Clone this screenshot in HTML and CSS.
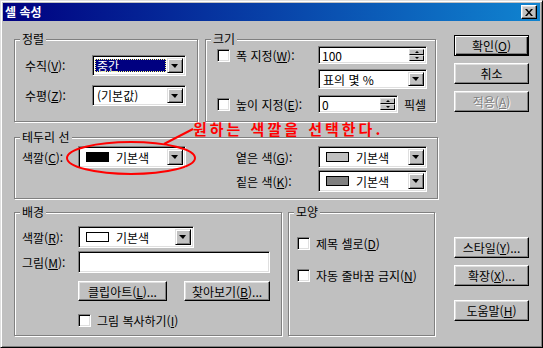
FILE: index.html
```html
<!DOCTYPE html>
<html lang="ko">

<head>
    <meta charset="UTF-8">
    <meta name="viewport" content="width=device-width, initial-scale=1.0">
    <title>셀 속성</title>
    <link rel="stylesheet" href="styles.css">
</head>

<body>
    <div class="window">
        <div class="titlebar">
            <span class="title">셀 속성</span>
            <button class="close" type="button">
                <svg width="8" height="7" viewBox="0 0 8 7"><path d="M0 0h2l2 2.5L6 0h2L5 3.5 8 7H6L4 4.5 2 7H0l3-3.5z" fill="#000"/></svg>
            </button>
        </div>

        <div class="dialog-body">
            <div class="main">
                <div class="row">
                    <div class="group g-align">
                        <span class="group-title">정렬</span>
                        <div class="form-row">
                            <span class="lbl lbl-align">수직(<u>V</u>):</span>
                            <div class="field combo w-align">
                                <span class="combo-text selected">중간</span>
                                <span class="drop"></span>
                            </div>
                        </div>
                        <div class="form-row gap-9">
                            <span class="lbl lbl-align">수평(<u>Z</u>):</span>
                            <div class="field combo w-align">
                                <span class="combo-text">(기본값)</span>
                                <span class="drop"></span>
                            </div>
                        </div>
                    </div>

                    <div class="group g-size">
                        <span class="group-title">크기</span>
                        <div class="form-row">
                            <span class="check-lbl"><span class="field check"></span><span>폭 지정(<u>W</u>):</span></span>
                            <div class="field spin w-width">
                                <span class="spin-text">100</span>
                                <span class="spin-btns"><span class="spin-up"></span><span class="spin-down"></span></span>
                            </div>
                        </div>
                        <div class="form-row gap-5 indent-size">
                            <div class="field combo combo-sm w-width">
                                <span class="combo-text">표의 몇 %</span>
                                <span class="drop"></span>
                            </div>
                        </div>
                        <div class="form-row gap-6">
                            <span class="check-lbl"><span class="field check"></span><span>높이 지정(<u>E</u>):</span></span>
                            <div class="field spin w-height">
                                <span class="spin-text">0</span>
                                <span class="spin-btns"><span class="spin-up"></span><span class="spin-down"></span></span>
                            </div>
                            <span class="unit">픽셀</span>
                        </div>
                    </div>
                </div>

                <div class="group g-border">
                    <span class="group-title">테두리 선</span>
                    <div class="border-left">
                        <div class="form-row">
                            <span class="lbl lbl-short">색깔(<u>C</u>):</span>
                            <div class="field combo combo-lg w-line">
                                <span class="combo-text"><span class="swatch sw-black"></span>기본색</span>
                                <span class="drop"></span>
                            </div>
                        </div>
                    </div>
                    <div class="border-right">
                        <div class="form-row">
                            <span class="lbl lbl-shade">옅은 색(<u>G</u>):</span>
                            <div class="field combo combo-lg w-width">
                                <span class="combo-text"><span class="swatch sw-light"></span>기본색</span>
                                <span class="drop"></span>
                            </div>
                        </div>
                        <div class="form-row gap-2">
                            <span class="lbl lbl-shade">짙은 색(<u>K</u>):</span>
                            <div class="field combo combo-lg w-width">
                                <span class="combo-text"><span class="swatch sw-dark"></span>기본색</span>
                                <span class="drop"></span>
                            </div>
                        </div>
                    </div>
                </div>

                <div class="row row-bottom">
                    <div class="group g-bg">
                        <span class="group-title">배경</span>
                        <div class="form-row">
                            <span class="lbl lbl-short">색깔(<u>R</u>):</span>
                            <div class="field combo combo-lg w-bgcolor">
                                <span class="combo-text"><span class="swatch sw-white"></span>기본색</span>
                                <span class="drop"></span>
                            </div>
                        </div>
                        <div class="form-row gap-3">
                            <span class="lbl lbl-short">그림(<u>M</u>):</span>
                            <div class="field text-input"></div>
                        </div>
                        <div class="form-row gap-8 indent-bg">
                            <button class="btn btn-clip" type="button">클립아트(<u>L</u>)...</button>
                            <button class="btn btn-browse" type="button">찾아보기(<u>B</u>)...</button>
                        </div>
                        <div class="form-row gap-11 indent-bg">
                            <span class="check-lbl"><span class="field check"></span><span>그림 복사하기(<u>I</u>)</span></span>
                        </div>
                    </div>

                    <div class="group g-shape">
                        <span class="group-title">모양</span>
                        <div class="form-row">
                            <span class="check-lbl"><span class="field check"></span><span>제목 셀로(<u>D</u>)</span></span>
                        </div>
                        <div class="form-row gap-15">
                            <span class="check-lbl"><span class="field check"></span><span>자동 줄바꿈 금지(<u>N</u>)</span></span>
                        </div>
                    </div>
                </div>
            </div>

            <div class="side">
                <button class="btn btn-side btn-default" type="button">확인(<u>O</u>)</button>
                <button class="btn btn-side" type="button">취소</button>
                <button class="btn btn-side disabled" type="button">적용(<u>A</u>)</button>
                <button class="btn btn-side btn-style" type="button">스타일(<u>Y</u>)...</button>
                <button class="btn btn-side" type="button">확장(<u>X</u>)...</button>
                <button class="btn btn-side btn-help" type="button">도움말(<u>H</u>)</button>
            </div>
        </div>
    </div>

    <!-- 빨간 설명 표시 -->
    <svg class="annot" width="543" height="348" viewBox="0 0 543 348">
        <ellipse cx="131" cy="158" rx="64" ry="16" fill="none" stroke="#ff0000" stroke-width="2"/>
        <line x1="164" y1="144" x2="193" y2="129" stroke="#ff0000" stroke-width="2"/>
    </svg>
    <div class="annot-text">원하는 색깔을 선택한다.</div>
</body>

</html>
```

FILE: styles.css
```css
* {
    box-sizing: border-box;
}

body {
    margin: 0;
    font-family: "Noto Sans CJK KR", "Liberation Sans", sans-serif;
    font-size: 12px;
    color: #000;
    background: #c0c0c0;
}

u {
    text-decoration: underline;
}

.window {
    width: 543px;
    height: 348px;
    background: #c0c0c0;
    border: 1px solid;
    border-color: #dfdfdf #000 #000 #dfdfdf;
    box-shadow: inset 1px 1px #fff, inset -1px -1px #808080;
    padding: 2px;
}

.titlebar {
    height: 18px;
    display: flex;
    align-items: center;
    justify-content: space-between;
    padding: 0 3px 0 2px;
    background: linear-gradient(to right, #000080, #1084d0);
}

.title {
    color: #fff;
    font-weight: bold;
    line-height: 18px;
}

.close {
    width: 16px;
    height: 14px;
    padding: 0;
    display: flex;
    align-items: center;
    justify-content: center;
    background: #c0c0c0;
    border: 1px solid;
    border-color: #fff #000 #000 #fff;
    box-shadow: inset -1px -1px #808080, inset 1px 1px #dfdfdf;
}

.dialog-body {
    display: flex;
    padding: 14px 0 0 11px;
}

.main {
    width: 424px;
    padding-top: 4px;
}

.row {
    display: flex;
    gap: 7px;
}

.row-bottom {
    gap: 6px;
    margin-top: 13px;
}

/* 그룹 상자 */
.group {
    position: relative;
    border: 1px solid #808080;
    box-shadow: inset 1px 1px #fff, 1px 1px #fff;
}

.group-title {
    position: absolute;
    top: -8px;
    left: 5px;
    padding: 0 2px;
    line-height: 14px;
    background: #c0c0c0;
}

.g-align {
    width: 184px;
    height: 83px;
    padding: 15px 0 0 10px;
}

.g-size {
    width: 231px;
    height: 83px;
    padding: 6px 0 0 11px;
}

.g-border {
    display: flex;
    width: 424px;
    height: 62px;
    margin-top: 15px;
    padding: 8px 0 0 7px;
}

.border-left {
    width: 214px;
}

.g-bg {
    width: 268px;
    height: 124px;
    padding: 13px 0 0 7px;
}

.g-shape {
    width: 147px;
    height: 124px;
    padding: 22px 0 0 8px;
}

/* 입력 줄 */
.form-row {
    display: flex;
    align-items: center;
}

.gap-2 { margin-top: 2px; }
.gap-3 { margin-top: 3px; }
.gap-5 { margin-top: 5px; }
.gap-6 { margin-top: 6px; }
.gap-8 { margin-top: 8px; }
.gap-9 { margin-top: 9px; }
.gap-11 { margin-top: 11px; }
.gap-15 { margin-top: 15px; }

.indent-size { margin-left: 101px; }
.indent-bg { margin-left: 56px; }

.lbl {
    flex: none;
    white-space: nowrap;
}

.lbl-align { width: 67px; }
.lbl-short { width: 56px; }
.lbl-shade { width: 82px; }

.check-lbl {
    display: flex;
    align-items: center;
    gap: 6px;
    width: 101px;
    white-space: nowrap;
}

.g-bg .check-lbl,
.g-shape .check-lbl {
    width: auto;
}

/* 움푹 들어간 칸 */
.field {
    background: #fff;
    border: 1px solid;
    border-color: #808080 #fff #fff #808080;
    box-shadow: inset 1px 1px #000, inset -1px -1px #dfdfdf;
}

.check {
    display: block;
    width: 13px;
    height: 13px;
}

.combo {
    display: flex;
    height: 21px;
    padding: 2px;
}

.combo-sm { height: 20px; }
.combo-lg { height: 22px; }

.w-align { width: 94px; }
.w-width { width: 109px; }
.w-height { width: 80px; }
.w-line { width: 108px; }
.w-bgcolor { width: 116px; }

.combo-text {
    flex: 1;
    display: flex;
    align-items: center;
    padding-left: 2px;
    white-space: nowrap;
}

.combo-text.selected {
    margin: 1px 1px 1px 0;
    color: #fff;
    background: #000080;
    outline: 1px dotted #ffff80;
    outline-offset: -1px;
}

.drop {
    position: relative;
    flex: none;
    width: 16px;
    background: #c0c0c0;
    border: 1px solid;
    border-color: #dfdfdf #000 #000 #dfdfdf;
    box-shadow: inset 1px 1px #fff, inset -1px -1px #808080;
}

.drop::after {
    content: "";
    position: absolute;
    left: 50%;
    top: 50%;
    margin: -2px 0 0 -4px;
    border-left: 4px solid transparent;
    border-right: 3px solid transparent;
    border-top: 4px solid #000;
}

.swatch {
    display: inline-block;
    width: 23px;
    height: 10px;
    margin: 0 7px 0 3px;
    border: 1px solid #000;
}

.sw-black { background: #000; }
.sw-light { background: #c0c0c0; }
.sw-dark { background: #808080; }
.sw-white { background: #fff; }

.spin {
    display: flex;
    height: 18px;
    padding: 2px;
}

.spin-text {
    flex: 1;
    line-height: 14px;
    padding-left: 1px;
}

.spin-btns {
    display: flex;
    flex-direction: column;
    width: 15px;
}

.spin-up,
.spin-down {
    position: relative;
    flex: 1;
    background: #c0c0c0;
    border: 1px solid;
    border-color: #dfdfdf #000 #000 #dfdfdf;
}

.spin-up::after,
.spin-down::after {
    content: "";
    position: absolute;
    left: 5px;
    top: 1px;
    border-left: 2px solid transparent;
    border-right: 2px solid transparent;
}

.spin-up::after { border-bottom: 2px solid #000; }
.spin-down::after { border-top: 2px solid #000; }

.unit {
    margin-left: 6px;
}

.text-input {
    width: 192px;
    height: 22px;
}

/* 버튼 */
.btn {
    display: block;
    height: 20px;
    padding: 0;
    font: inherit;
    color: #000;
    background: #c0c0c0;
    border: 1px solid;
    border-color: #fff #000 #000 #fff;
    box-shadow: inset -1px -1px #808080, inset 1px 1px #dfdfdf;
}

.btn-clip { width: 89px; }
.btn-browse { width: 86px; margin-left: 17px; }

.side {
    margin-left: 16px;
    width: 75px;
}

.btn-side {
    width: 75px;
    height: 21px;
    margin-bottom: 7px;
}

.btn-default {
    border: 1px solid #000;
    box-shadow: inset 1px 1px #fff, inset -1px -1px #000, inset -2px -2px #808080;
}

.disabled {
    color: #808080;
    text-shadow: 1px 1px #fff;
}

.btn-style { margin-top: 125px; }
.btn-help { margin-top: 14px; }

/* 빨간 설명 */
.annot {
    position: absolute;
    left: 0;
    top: 0;
    pointer-events: none;
}

.annot-text {
    position: absolute;
    left: 193px;
    top: 120px;
    font-size: 15px;
    font-weight: bold;
    letter-spacing: 3px;
    line-height: 18px;
    color: #ff0000;
}
```
